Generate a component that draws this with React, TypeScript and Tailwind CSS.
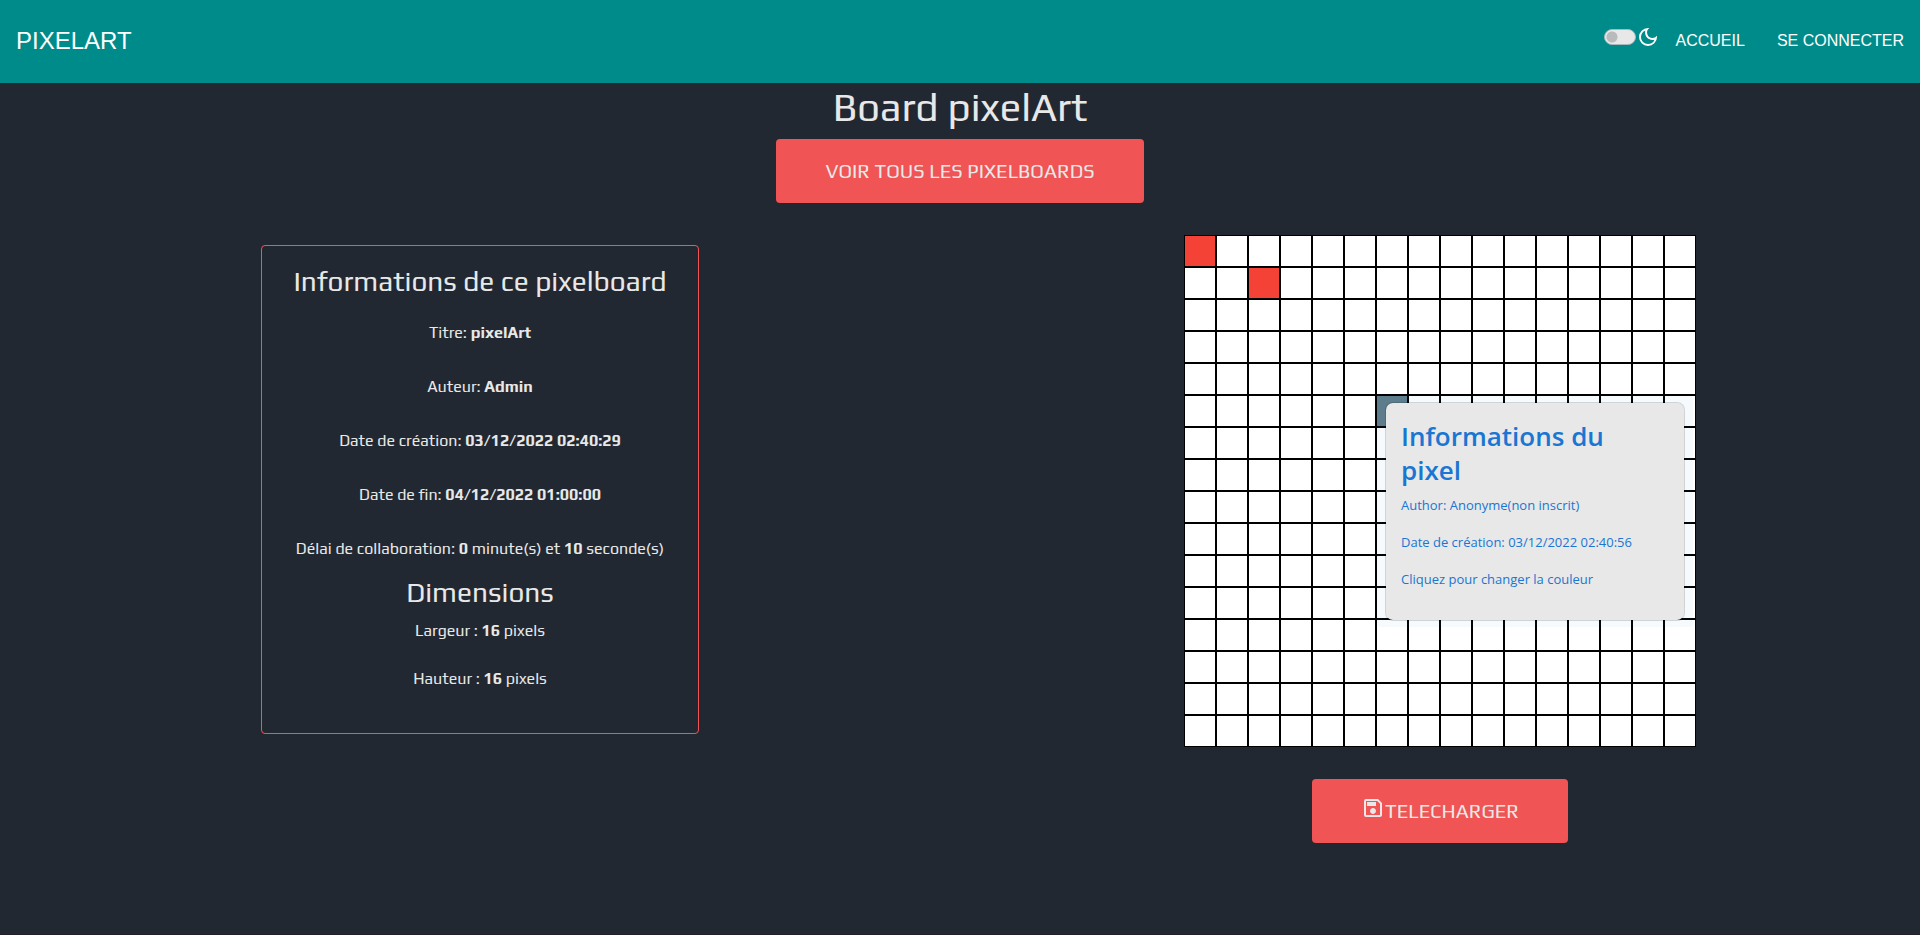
import { useState } from "react";
import { MdOutlineDarkMode, MdOutlineSave } from "react-icons/md";

const SIZE = 16;

const painted: Record<string, string> = {
  "0-0": "bg-[#f44336]",
  "1-2": "bg-[#f44336]",
  "5-6": "bg-[#607d8b]",
};

function Header() {
  const [light, setLight] = useState(false);
  return (
    <header className="flex h-[83px] items-center justify-between bg-[#008b8b] px-4 pb-0.5 font-['Liberation_Sans',sans-serif] text-white">
      <a href="#" className="text-2xl">PIXELART</a>
      <nav className="flex items-center">
        <label className="mb-2 flex cursor-pointer items-center">
          <input
            type="checkbox"
            role="switch"
            aria-label="Changer de thème"
            checked={light}
            onChange={(e) => setLight(e.target.checked)}
            className="h-4 w-8 appearance-none rounded-full border border-[#adb5bd] bg-[#e8e8e8] bg-[radial-gradient(circle_at_7px_7px,#b9babc_5px,transparent_6px)] checked:bg-[radial-gradient(circle_at_23px_7px,#b9babc_5px,transparent_6px)]"
          />
          <MdOutlineDarkMode className="size-6" aria-hidden="true" />
        </label>
        <a href="#" className="ml-4">ACCUEIL</a>
        <a href="#" className="ml-8">SE CONNECTER</a>
      </nav>
    </header>
  );
}

function InfoCard() {
  return (
    <section className="flex w-[438px] flex-col items-center rounded-sm border border-[#f05454] pt-4 pb-[42px] text-center text-base leading-6">
      <h2 className="mb-[21px] text-[28px] leading-[38px]">Informations de ce pixelboard</h2>
      <div className="flex flex-col gap-[30px]">
        <p>Titre: <b>pixelArt</b></p>
        <p>Auteur: <b>Admin</b></p>
        <p>Date de création: <b>03/12/2022 02:40:29</b></p>
        <p>Date de fin: <b>04/12/2022 01:00:00</b></p>
        <p>Délai de collaboration: <b>0</b> minute(s) et <b>10</b> seconde(s)</p>
      </div>
      <h2 className="mt-3 mb-2 text-[28px] leading-[38px]">Dimensions</h2>
      <div className="flex flex-col gap-6">
        <p>Largeur : <b>16</b> pixels</p>
        <p>Hauteur : <b>16</b> pixels</p>
      </div>
    </section>
  );
}

function PixelPopover() {
  return (
    <div className="absolute top-[161px] left-[193px] rounded bg-[#1976d2]/4 px-2 py-1.5 font-['Open_Sans',sans-serif]">
      <div role="tooltip" className="w-[300px] rounded-lg border border-black/15 bg-[#e8e8e8] bg-clip-padding px-[15px] pt-4 pb-[30px] text-[13px] leading-[21px] text-[#1976d2]">
        <h3 className="mb-2 pr-8 text-[26px] leading-[34px] font-semibold">Informations du pixel</h3>
        <div className="flex flex-col gap-4">
          <p>Author: Anonyme(non inscrit)</p>
          <p>Date de création: 03/12/2022 02:40:56</p>
          <p>Cliquez pour changer la couleur</p>
        </div>
      </div>
    </div>
  );
}

function Board() {
  return (
    <div className="relative">
      <div className="grid grid-cols-[repeat(16,32px)] auto-rows-[32px]">
        {Array.from({ length: SIZE * SIZE }, (_, i) => {
          const row = Math.floor(i / SIZE);
          const col = i % SIZE;
          return (
            <button
              key={i}
              type="button"
              aria-label={`Pixel ${col + 1}, ${row + 1}`}
              className={`border border-black ${painted[`${row}-${col}`] ?? "bg-white"}`}
            />
          );
        })}
      </div>
      <PixelPopover />
    </div>
  );
}

export default function App() {
  return (
    <div className="min-h-screen border-b border-[#231f2b] bg-[#222831] font-['Play','Noto_Sans',sans-serif] text-[#e8e8e8]">
      <Header />
      <main>
        <div className="flex flex-col items-center">
          <h1 className="mb-2 text-[40px] leading-[48px]">Board pixelArt</h1>
          <a href="#" className="flex h-16 w-[368px] items-center justify-center rounded bg-[#f05454] text-xl">
            VOIR TOUS LES PIXELBOARDS
          </a>
        </div>
        <div className="mt-8 grid grid-cols-2 items-start justify-items-center">
          <div className="pt-2.5">
            <InfoCard />
          </div>
          <div className="flex flex-col items-center gap-8">
            <Board />
            <button type="button" className="flex h-16 w-64 items-center justify-center rounded bg-[#f05454] text-xl">
              <MdOutlineSave className="mb-1.5 size-6" aria-hidden="true" />
              TELECHARGER
            </button>
          </div>
        </div>
      </main>
    </div>
  );
}
